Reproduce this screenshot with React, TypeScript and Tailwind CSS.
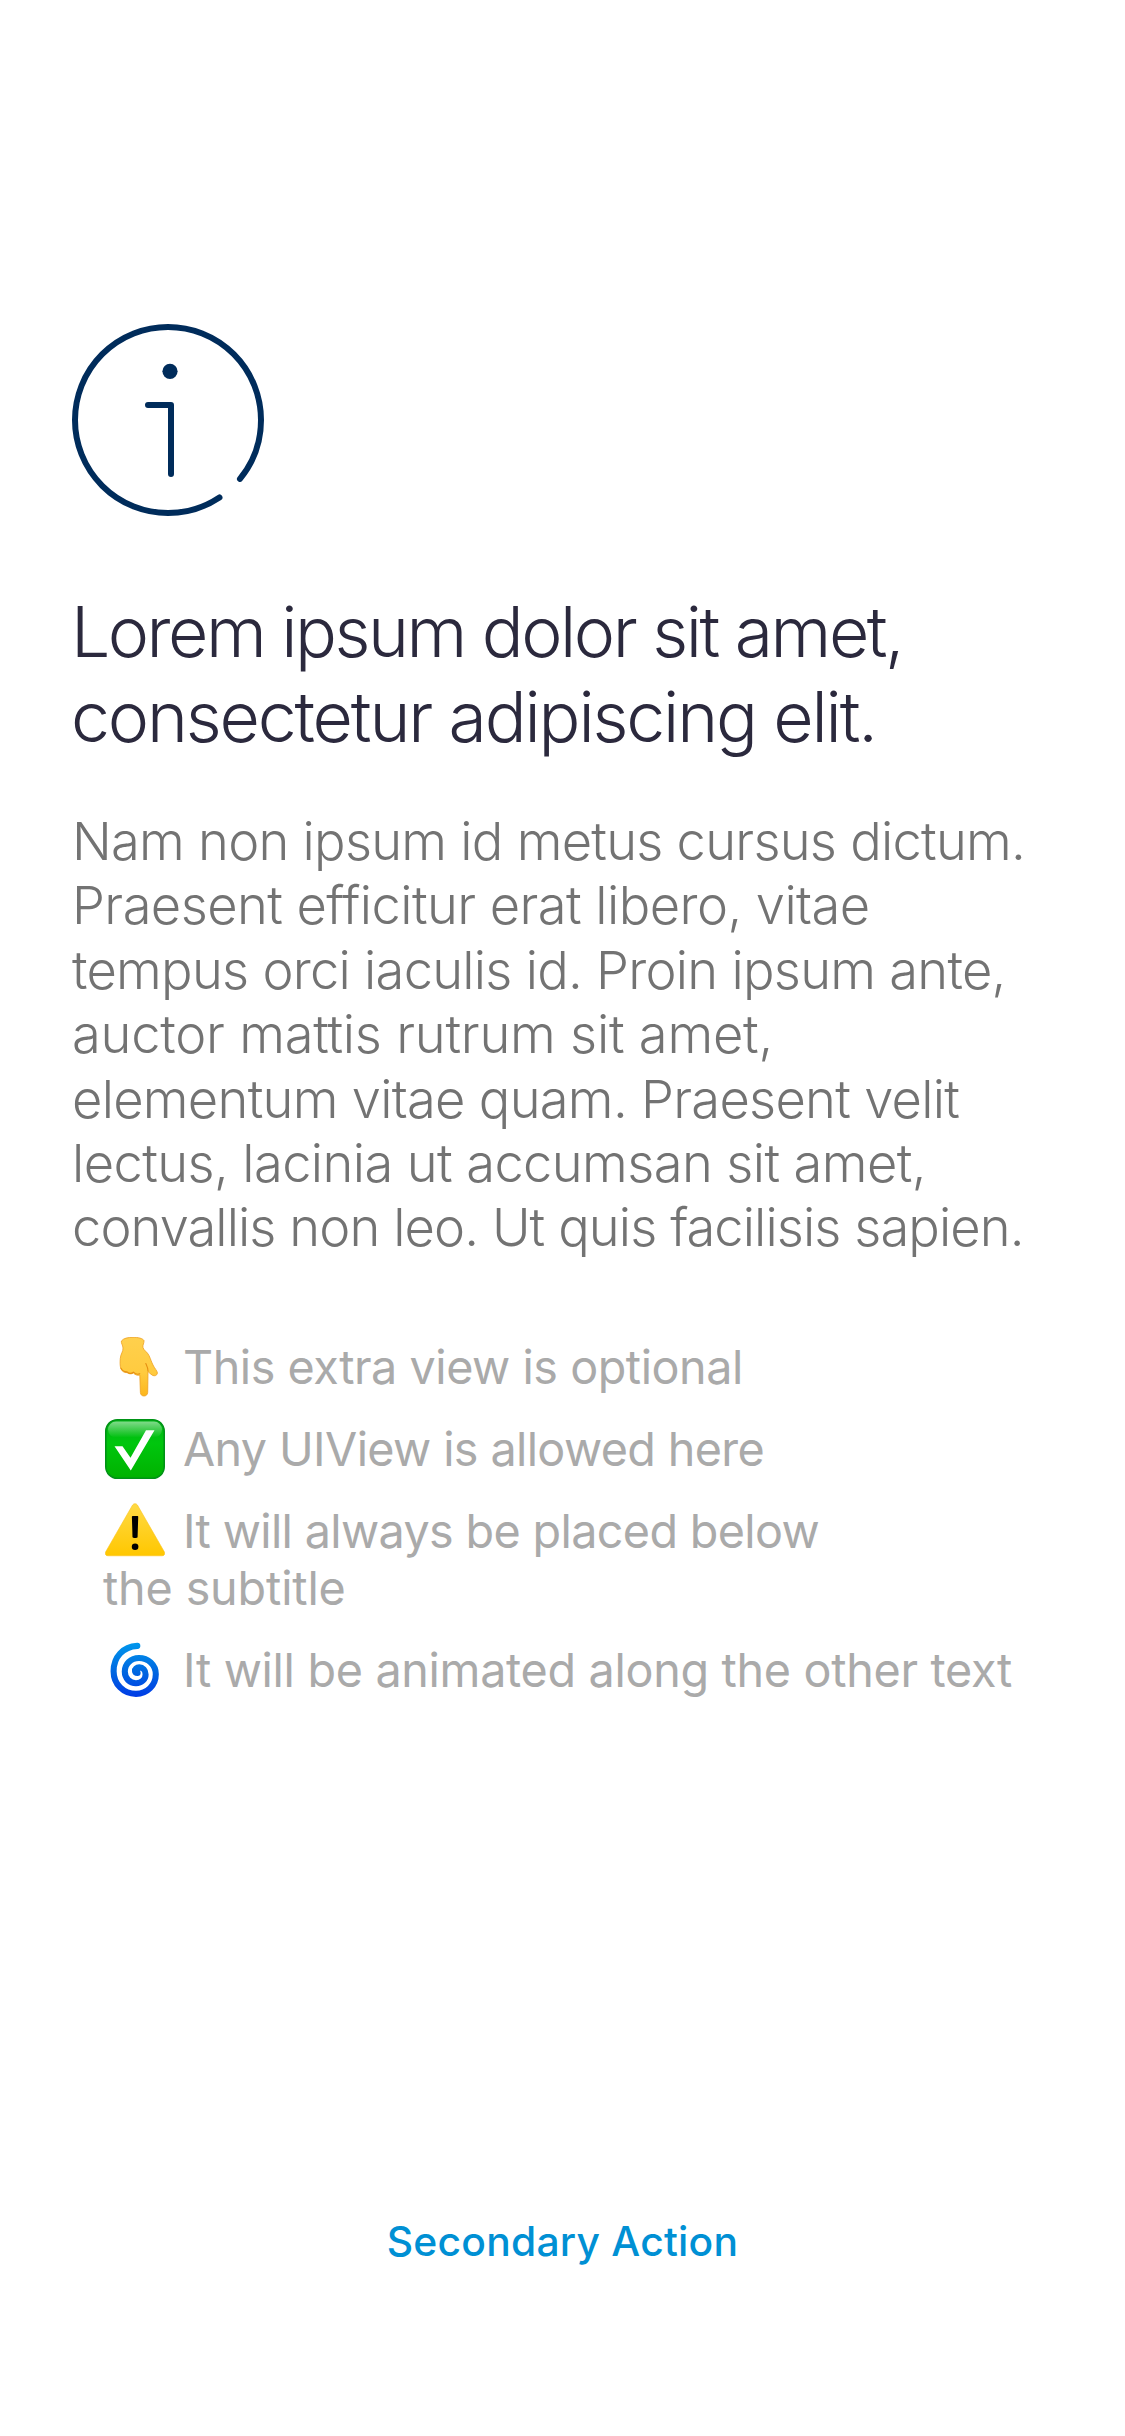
import type { ReactNode } from "react";

function InfoIcon() {
  return (
    <svg viewBox="0 0 192 192" className="size-[192px]" fill="none" stroke="#002c5b" strokeWidth="6" strokeLinecap="round" strokeLinejoin="round">
      <circle cx="96" cy="96" r="93" pathLength={360} strokeDasharray="39.3 17.1 303.6" />
      <path d="M76 81H99V150" />
      <circle cx="98" cy="47.3" r="7.6" fill="#002c5b" stroke="none" />
    </svg>
  );
}

function PointDown() {
  return (
    <svg viewBox="0 0 60 60" className="size-[60px]">
      <defs>
        <linearGradient id="skin" x1="0" y1="0" x2="0" y2="1">
          <stop offset="0" stopColor="#ffd04d" />
          <stop offset="0.6" stopColor="#ffcb3f" />
          <stop offset="1" stopColor="#fcb61c" />
        </linearGradient>
      </defs>
      <path
        d="M16.4 4C18.5 1.2 23 .3 28 .3S37.6 1.2 39 3.6C39.2 6 37.6 8 37.9 10.3C38.6 13.5 42.3 14.8 44 18.5C45.8 22.5 46.5 25 48 28C49.3 31 52.4 34 52.4 36C52 38.8 49.5 39.3 47.3 38.2C45.5 37.2 44 35.4 43 34.5L42.7 55.5C42.4 58 40.8 59 39 59S35.6 58 35.4 55.5L34.8 38C32.5 38.8 30 37.8 28.4 36C26.5 37.3 23.5 37 22 35.6C19.5 36 16.8 34.2 15.8 31.5C14.9 28.5 15 25 15.3 21.3C15.6 17 18.3 14.5 18 11C17.8 8 16 6.5 16.4 4Z"
        fill="url(#skin)"
        stroke="#eea01f"
        strokeWidth="0.8"
      />
      <path d="M16 31.3C17.5 34 20 35 22 34.8C24 36.7 26.5 36.6 28.4 35.2C30.5 37.2 33 37.5 34.8 36.8M43 34C42.8 30 41.5 28 40.8 26.5" fill="none" stroke="#e58f12" strokeWidth="1.1" strokeLinecap="round" />
    </svg>
  );
}

function CheckBox() {
  return (
    <svg viewBox="0 0 60 60" className="size-[60px]">
      <defs>
        <linearGradient id="green" x1="0" y1="0" x2="0" y2="1">
          <stop offset="0" stopColor="#00b414" />
          <stop offset="0.4" stopColor="#00c60e" />
          <stop offset="1" stopColor="#00b200" />
        </linearGradient>
        <linearGradient id="gloss" x1="0" y1="0" x2="0" y2="1">
          <stop offset="0" stopColor="#fff" stopOpacity="0.5" />
          <stop offset="1" stopColor="#fff" stopOpacity="0" />
        </linearGradient>
      </defs>
      <rect x="0.8" y="0.8" width="58.4" height="58.4" rx="11.5" fill="url(#green)" stroke="#009316" strokeWidth="1.6" />
      <rect x="3" y="2.6" width="54" height="16" rx="8" fill="url(#gloss)" />
      <path d="M9.5 27.3H17.5L25.5 38.7L41 11.2H49.5L25.8 51.5Z" fill="#fff" />
    </svg>
  );
}

function Warning() {
  return (
    <svg viewBox="0 0 60 60" className="size-[60px]">
      <defs>
        <linearGradient id="amber" x1="0" y1="0" x2="0" y2="1">
          <stop offset="0" stopColor="#ffda45" />
          <stop offset="1" stopColor="#ffc700" />
        </linearGradient>
      </defs>
      <path d="M27.6 4C28.6 2.3 31.4 2.3 32.4 4L59.3 50.8C60.3 53 59.3 54.8 57 54.8H3C.7 54.8-.3 53 .7 50.8Z" fill="url(#amber)" stroke="#fbc31c" strokeWidth="0.6" />
      <path d="M27.6 15H32.6C33 15 33.2 15.3 33.2 15.7L32.6 36C32.5 37.3 27.6 37.3 27.5 36L26.9 15.7C26.9 15.3 27.2 15 27.6 15Z" />
      <circle cx="30.1" cy="45.7" r="3.3" />
    </svg>
  );
}

function Cyclone() {
  return (
    <svg viewBox="0 0 60 60" className="size-[60px]">
      <defs>
        <linearGradient id="blue" gradientUnits="userSpaceOnUse" x1="0" y1="3" x2="0" y2="57">
          <stop offset="0" stopColor="#0097ec" />
          <stop offset="0.55" stopColor="#0065e0" />
          <stop offset="1" stopColor="#003be6" />
        </linearGradient>
      </defs>
      <path
        d="M32.3 5.9C18 6.7 8.6 17 8.6 31.2C8.6 44.3 18.5 53.9 31 53.9C42.3 53.9 50.8 45.2 50.8 34.3C50.8 24.7 43 18 34 18C25.7 18 19.8 24 19.8 31.6C19.8 38.5 24.8 43.2 31 43.2C36.6 43.2 40.6 39.2 40.6 34.4C40.6 30 37.8 27.4 34.3 27.4C31.5 27.4 29.8 29.2 30 31C30.1 32.4 31.4 33 32.6 33"
        fill="none"
        stroke="url(#blue)"
        strokeWidth="6.1"
        strokeLinecap="round"
      />
    </svg>
  );
}

function Item({ icon, children }: { icon: ReactNode; children: ReactNode }) {
  return (
    <div className="flex h-[57px] items-center gap-[18px]">
      {icon}
      {children}
    </div>
  );
}

export default function App() {
  return (
    <main className="flex h-[2436px] w-[1125px] flex-col bg-white px-[72px] pt-[324px] font-['Inter',sans-serif] whitespace-nowrap">
      <InfoIcon />

      <h1 className="-ml-px mt-[73px] text-[69.7px] leading-[85px] font-light text-[#2b293d]">
        <span className="block tracking-[-2.51px]">Lorem ipsum dolor sit amet,</span>
        <span className="block tracking-[-2.17px]">consectetur adipiscing elit.</span>
      </h1>

      <p className="mt-[50px] text-[52.4px] leading-[64.4px] font-light text-[#737373]">
        <span className="block tracking-[-0.73px]">Nam non ipsum id metus cursus dictum.</span>
        <span className="block tracking-[-0.55px]">Praesent efficitur erat libero, vitae</span>
        <span className="block tracking-[-0.72px]">tempus orci iaculis id. Proin ipsum ante,</span>
        <span className="block tracking-[-0.22px]">auctor mattis rutrum sit amet,</span>
        <span className="block tracking-[-0.7px]">elementum vitae quam. Praesent velit</span>
        <span className="block tracking-[-0.58px]">lectus, lacinia ut accumsan sit amet,</span>
        <span className="block tracking-[-0.89px]">convallis non leo. Ut quis facilisis sapien.</span>
      </p>

      <ul className="mt-[79px] ml-[33px] flex flex-col gap-[25px] text-[46.7px] leading-[57px] text-[#aaaaaa]">
        <li>
          <Item icon={<PointDown />}>
            <span className="tracking-[-0.46px]">This extra view is optional</span>
          </Item>
        </li>
        <li>
          <Item icon={<CheckBox />}>
            <span className="tracking-[-0.62px]">Any UIView is allowed here</span>
          </Item>
        </li>
        <li>
          <Item icon={<Warning />}>
            <span className="tracking-[-0.64px]">It will always be placed below</span>
          </Item>
          <span className="-ml-0.5 block tracking-[-0.15px]">the subtitle</span>
        </li>
        <li>
          <Item icon={<Cyclone />}>
            <span className="tracking-[-0.31px]">It will be animated along the other text</span>
          </Item>
        </li>
      </ul>

      <button className="mt-auto mb-[170px] self-center text-[40.8px] leading-[50px] font-medium tracking-[0.24px] text-[#0090d4]">
        Secondary Action
      </button>
    </main>
  );
}
